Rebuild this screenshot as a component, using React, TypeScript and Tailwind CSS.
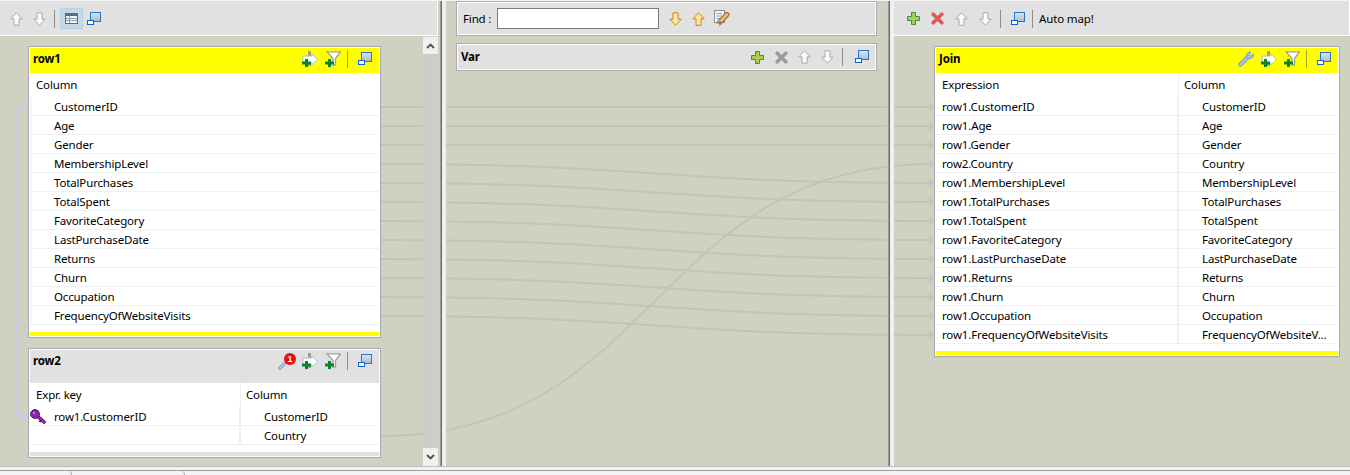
import React from 'react';

const leftCols = ['CustomerID', 'Age', 'Gender', 'MembershipLevel', 'TotalPurchases', 'TotalSpent', 'FavoriteCategory', 'LastPurchaseDate', 'Returns', 'Churn', 'Occupation', 'FrequencyOfWebsiteVisits'];

const joinRows: [string, string][] = [
  ['row1.CustomerID', 'CustomerID'],
  ['row1.Age', 'Age'],
  ['row1.Gender', 'Gender'],
  ['row2.Country', 'Country'],
  ['row1.MembershipLevel', 'MembershipLevel'],
  ['row1.TotalPurchases', 'TotalPurchases'],
  ['row1.TotalSpent', 'TotalSpent'],
  ['row1.FavoriteCategory', 'FavoriteCategory'],
  ['row1.LastPurchaseDate', 'LastPurchaseDate'],
  ['row1.Returns', 'Returns'],
  ['row1.Churn', 'Churn'],
  ['row1.Occupation', 'Occupation'],
  ['row1.FrequencyOfWebsiteVisits', 'FrequencyOfWebsiteV...'],
];

// from y on row1 -> to y on Join
const links: [number, number][] = [
  [107, 107], [126, 126], [145, 145], [164, 183], [183, 202], [202, 221],
  [221, 240], [240, 259], [259, 278], [278, 297], [297, 316], [316, 335],
];

const Links = () => (
  <svg className="absolute inset-0" width={1350} height={475} fill="none">
    {links.map(([a, b]) => (
      <g key={a}>
        <path d={`M381 ${a}C656 ${a} 656 ${b} 931 ${b}`} stroke="#c4c4b3" strokeWidth={2} />
        <polygon points={`929,${b - 5} 935,${b} 929,${b + 5}`} fill="#c6c6b5" />
      </g>
    ))}
    <path d="M381 436C656 436 656 164 931 164" stroke="#c4c4b3" strokeWidth={2} />
    <polygon points="929,159 935,164 929,169" fill="#c6c6b5" />
    <path d="M29 107H24Q16 107 16 115V409Q16 417 24 417H27" stroke="#d3c8ee" strokeWidth={2} />
    <polygon points="23,411 29,417 23,423" fill="#d3c8ee" />
  </svg>
);

const ArrowUp = ({ stroke = '#a9a9a9', fill = '#fbfbfb' }: { stroke?: string; fill?: string }) => (
  <svg width={13} height={14} viewBox="0 0 13 14" className="shrink-0">
    <polygon points="6.5,0.8 12.2,6.8 9,6.8 9,13.2 4,13.2 4,6.8 0.8,6.8" fill={fill} stroke={stroke} />
  </svg>
);

const ArrowDown = ({ stroke = '#a9a9a9', fill = '#fbfbfb' }: { stroke?: string; fill?: string }) => (
  <svg width={13} height={14} viewBox="0 0 13 14" className="shrink-0">
    <polygon points="6.5,13.2 12.2,7.2 9,7.2 9,0.8 4,0.8 4,7.2 0.8,7.2" fill={fill} stroke={stroke} />
  </svg>
);

const WindowIcon = () => (
  <svg width={14} height={14} viewBox="0 0 14 14" className="shrink-0">
    <defs>
      <linearGradient id="win" x1="0" y1="0" x2="0" y2="1">
        <stop offset="0" stopColor="#dbe4ee" />
        <stop offset="1" stopColor="#a9bccf" />
      </linearGradient>
    </defs>
    <rect x="3.5" y="0.5" width="10" height="9" fill="url(#win)" stroke="#2f73c9" />
    <rect x="0.5" y="8.5" width="6" height="4" fill="#ffffff" stroke="#0f62d0" />
  </svg>
);

const TableIcon = () => (
  <svg width={13} height={11} viewBox="0 0 13 11" className="shrink-0">
    <rect x="0.5" y="0.5" width="12" height="10" fill="#f4f6f8" stroke="#5d6b7d" />
    <rect x="1" y="1" width="11" height="2" fill="#5d6b7d" />
    <path d="M1 5.5H12M1 7.5H12M4.5 3V10" stroke="#8d9cb0" />
  </svg>
);

const GreenPlus = () => (
  <svg width={13} height={13} viewBox="0 0 13 13" className="shrink-0">
    <path d="M4.5 .5H8.5V4.5H12.5V8.5H8.5V12.5H4.5V8.5H.5V4.5H4.5Z" fill="#a9cb50" stroke="#3f8c58" />
  </svg>
);

const Cross = ({ fill }: { fill: string }) => (
  <svg width={13} height={13} viewBox="0 0 13 13" className="shrink-0">
    <path d="M2.2 2.2L10.8 10.8M10.8 2.2L2.2 10.8" stroke={fill} strokeWidth={3.6} strokeLinecap="round" />
  </svg>
);

const MapPlus = () => (
  <svg width={16} height={16} viewBox="0 0 16 16" className="shrink-0">
    <rect x="6" y="0" width="3" height="5" fill="#9c9c9c" />
    <polygon points="1,5 10,5 10,3 15.5,8.5 10,14 10,12 1,12" fill="#ffffff" stroke="#bdbdbd" />
    <rect x="6" y="12" width="3" height="3" fill="#9c9c9c" />
    <path d="M0 10.5H9V13.5H0ZM3 8H6V16H3Z" fill="#07862b" />
  </svg>
);

const FilterPlus = () => (
  <svg width={16} height={16} viewBox="0 0 16 16" className="shrink-0">
    <polygon points="2,.8 15.5,.8 10.5,7.5 10.5,14 8,14 8,7.5" fill="#ffffff" stroke="#a0a0a0" strokeWidth={1.3} />
    <path d="M0 10.5H9V13.5H0ZM3 8H6V16H3Z" fill="#07862b" />
  </svg>
);

const Wrench = () => (
  <svg width={16} height={16} viewBox="0 0 16 16" className="shrink-0">
    <path d="M2.5 13.5L9.5 6.5" stroke="#7d9cc8" strokeWidth={4.4} strokeLinecap="round" />
    <path d="M2.5 13.5L9.5 6.5" stroke="#b4cbe8" strokeWidth={2} strokeLinecap="round" />
    <path d="M9 7A4 4 0 0 1 13 1L10.8 3.6 12.6 5.4 15.4 3.2A4 4 0 0 1 9 7Z" fill="#a8c0e0" stroke="#7d9cc8" />
  </svg>
);

const KeySearch = () => (
  <svg width={18} height={17} viewBox="0 0 18 17" className="shrink-0">
    <path d="M2 15L7 10" stroke="#7fa4d6" strokeWidth={3.6} strokeLinecap="round" />
    <path d="M2 15L7 10" stroke="#bcd2ee" strokeWidth={1.4} strokeLinecap="round" />
    <circle cx="12" cy="6" r="6" fill="#ea0f0f" />
    <text x="12" y="9" textAnchor="middle" fontSize="9" fontWeight="700" fill="#ffffff" fontFamily="Liberation Sans, sans-serif">1</text>
  </svg>
);

const KeyIcon = () => (
  <svg width={16} height={15} viewBox="0 0 16 15" className="shrink-0">
    <path d="M5 5L14 13" stroke="#4d1160" strokeWidth={3.6} strokeLinecap="round" />
    <path d="M5 5L14 13" stroke="#a12fc0" strokeWidth={1.8} strokeLinecap="round" />
    <path d="M11 11L9.5 13.2" stroke="#4d1160" strokeWidth={1.6} />
    <circle cx="5" cy="5" r="4.4" fill="#8f24ad" stroke="#4d1160" />
    <circle cx="4" cy="4" r="1" fill="#d68ae6" />
  </svg>
);

const EditDoc = () => (
  <svg width={17} height={17} viewBox="0 0 17 17" className="shrink-0">
    <rect x="0.5" y="0.5" width="10" height="12" fill="#f1f4fa" stroke="#8c8f96" />
    <path d="M2.5 3.5H8M2.5 6H8M2.5 8.5H6" stroke="#7f9fd0" />
    <path d="M5 13L13 4.5" stroke="#8a6a33" strokeWidth={5} strokeLinecap="round" />
    <path d="M5 13L13 4.5" stroke="#f2bb6b" strokeWidth={3} strokeLinecap="round" />
    <path d="M1 16.5L5.5 11 8 13.5 3 16.5Z" fill="#fdf2c0" />
    <circle cx="6" cy="13" r="1.8" fill="#77736d" />
  </svg>
);

const Sep = ({ className }: { className: string }) => <div className={`w-px shrink-0 ${className}`} />;

const Toolbar = ({ children }: { children: React.ReactNode }) => (
  <div className="flex h-[35px] items-center border-r border-b border-white bg-[#e1e1e1] pt-px">{children}</div>
);

const Box = ({ className, children }: { className: string; children: React.ReactNode }) => (
  <div className={`border border-[#a6a9b2] bg-white p-px ${className}`}>{children}</div>
);

const HeadIcons = ({ sepColor, lead }: { sepColor: string; lead?: React.ReactNode }) => (
  <div className="ml-auto flex pr-[7px]">
    {lead}
    <MapPlus />
    <div className="ml-[7px]"><FilterPlus /></div>
    <Sep className={`ml-[6px] -mt-px h-[18px] ${sepColor}`} />
    <div className="ml-[10px] mt-px"><WindowIcon /></div>
  </div>
);

const Row1Table = () => (
  <Box className="w-[353px]">
    <div className="flex h-[25px] bg-[#ffff00] pl-[3px] pt-[3px]">
      <span className="font-bold leading-4">row1</span>
      <HeadIcons sepColor="bg-[#a8a820]" />
    </div>
    <div className="flex h-6 items-center pl-[6px]">Column</div>
    {leftCols.map((c) => (
      <div key={c} className="ml-px flex h-[19px] items-center border-b border-l border-[#edf0f4] pl-[22px] pt-[2px]">{c}</div>
    ))}
    <div className="mt-[7px] h-1 bg-[#ffff00]" />
  </Box>
);

const Row2Table = () => (
  <Box className="mt-[10px] w-[353px]">
    <div className="flex h-[33px] bg-[#e1e1e1] pl-[3px] pt-[3px]">
      <span className="font-bold leading-4">row2</span>
      <HeadIcons
        sepColor="bg-[#8d8d8d]"
        lead={<div className="mr-[6px]"><KeySearch /></div>}
      />
    </div>
    <div className="flex h-6 items-center">
      <div className="flex h-full w-[211px] items-center border-r border-[#edf0f4] pl-[6px]">Expr. key</div>
      <div className="pl-[5px]">Column</div>
    </div>
    <div className="flex h-[19px] items-center border-b border-[#edf0f4]">
      <div className="flex h-full w-[211px] items-center border-r-2 border-[#edf0f4]">
        <KeyIcon />
        <span className="ml-2 pt-[2px]">row1.CustomerID</span>
      </div>
      <div className="pl-[23px] pt-[2px]">CustomerID</div>
    </div>
    <div className="flex h-[19px] items-center border-b border-[#edf0f4]">
      <div className="h-full w-[211px] border-r-2 border-[#edf0f4]" />
      <div className="pl-[23px] pt-[2px]">Country</div>
    </div>
    <div className="mt-[7px] h-1 bg-[#e1e1e1]" />
  </Box>
);

const JoinTable = () => (
  <Box className="w-[406px]">
    <div className="flex h-[25px] bg-[#ffff00] pl-[3px] pt-[3px]">
      <span className="font-bold leading-4">Join</span>
      <HeadIcons sepColor="bg-[#a8a820]" lead={<div className="mr-[7px]"><Wrench /></div>} />
    </div>
    <div className="flex h-6 items-center">
      <div className="flex h-full w-[243px] items-center border-r border-[#edf0f4] pl-[6px]">Expression</div>
      <div className="pl-[5px]">Column</div>
    </div>
    {joinRows.map(([expr, col]) => (
      <div key={col} className="flex h-[19px] items-center border-b border-[#edf0f4]">
        <div className="flex h-full w-[243px] items-center border-r-2 border-[#edf0f4] pl-[6px] pt-[2px]">{expr}</div>
        <div className="pl-[23px] pt-[2px]">{col}</div>
      </div>
    ))}
    <div className="mt-[7px] h-1 bg-[#ffff00]" />
  </Box>
);

const ScrollBar = () => (
  <div className="mt-px flex w-[15px] flex-col bg-[#f0f0f0]">
    <div className="flex h-[17px] items-center justify-center">
      <svg width={9} height={6} viewBox="0 0 9 6" fill="none"><path d="M1 5L4.5 1.5 8 5" stroke="#505050" strokeWidth={1.8} /></svg>
    </div>
    <div className="flex-1 bg-[#cdcdcd]" />
    <div className="flex h-[18px] items-center justify-center">
      <svg width={9} height={6} viewBox="0 0 9 6" fill="none"><path d="M1 1L4.5 4.5 8 1" stroke="#505050" strokeWidth={1.8} /></svg>
    </div>
  </div>
);

const Sash = ({ className }: { className: string }) => (
  <div className={`flex shrink-0 bg-[#f0f0f0] ${className}`}>
    <div className="w-px bg-[#d1d1c2]" />
    <div className="w-px bg-[#9a9a9a]" />
    <div className="w-px bg-[#6d6d6d]" />
  </div>
);

export default function App() {
  return (
    <div className="relative h-[475px] w-[1350px] overflow-hidden bg-[#d1d1c2] font-['Noto_Sans',sans-serif] text-[11.5px] leading-4 tracking-[-0.15px] text-black">
      <Links />
      <div className="relative flex h-[466px] border-t border-[#f4f4f4]">
        {/* Left: inputs */}
        <section className="flex w-[439px] shrink-0 flex-col pr-px">
          <Toolbar>
            <div className="ml-[10px]"><ArrowUp /></div>
            <div className="ml-[10px]"><ArrowDown /></div>
            <Sep className="ml-2 h-[18px] bg-[#8d8d8d]" />
            <div className="ml-[5px] flex h-[21px] w-[23px] items-center justify-center border border-[#b9d1e2] bg-[#c6d9e6]">
              <TableIcon />
            </div>
            <div className="ml-1"><WindowIcon /></div>
          </Toolbar>
          <div className="flex min-h-0 flex-1">
            <div className="min-w-0 flex-1 pl-7 pt-[10px]">
              <Row1Table />
              <Row2Table />
            </div>
            <ScrollBar />
          </div>
        </section>

        <Sash className="w-[7px]" />

        {/* Middle: vars */}
        <section className="w-[441px] shrink-0 pl-[10px] pr-[10px]">
          <div className="flex h-[35px] items-center border border-[#ababab] bg-[#e1e1e1] pl-[6px] outline outline-1 -outline-offset-2 outline-white">
            <span className="w-[34px]">Find :</span>
            <div className="h-[21px] w-[162px] border border-[#7a7a7a] bg-white" />
            <div className="ml-[10px]"><ArrowDown stroke="#c8860f" fill="#ffe8a6" /></div>
            <div className="ml-[10px]"><ArrowUp stroke="#c8860f" fill="#ffe8a6" /></div>
            <div className="ml-[9px]"><EditDoc /></div>
          </div>
          <div className="mt-[7px] flex h-[28px] items-center border border-[#ababab] bg-[#e1e1e1] pl-[4px] pr-[7px] outline outline-1 -outline-offset-2 outline-white">
            <span className="font-bold">Var</span>
            <div className="ml-auto flex items-center">
              <GreenPlus />
              <div className="ml-[11px]"><Cross fill="#9a9a9a" /></div>
              <div className="ml-[10px]"><ArrowUp /></div>
              <div className="ml-[10px]"><ArrowDown /></div>
              <Sep className="ml-2 h-[18px] bg-[#8d8d8d]" />
              <div className="ml-3"><WindowIcon /></div>
            </div>
          </div>
        </section>

        <Sash className="w-[7px]" />

        {/* Right: outputs */}
        <section className="min-w-0 flex-1">
          <Toolbar>
            <div className="ml-[13px]"><GreenPlus /></div>
            <div className="ml-[11px]"><Cross fill="#e2535b" /></div>
            <div className="ml-[11px]"><ArrowUp /></div>
            <div className="ml-[11px]"><ArrowDown /></div>
            <Sep className="ml-[8px] h-[18px] bg-[#8d8d8d]" />
            <div className="ml-[10px]"><WindowIcon /></div>
            <Sep className="ml-[7px] h-[18px] bg-[#8d8d8d]" />
            <span className="ml-[6px]">Auto map!</span>
          </Toolbar>
          <div className="pl-[40px] pt-[10px]">
            <JoinTable />
          </div>
        </section>
      </div>

      {/* Tab strip */}
      <div className="relative h-[9px] border-t border-[#bdbdbd] bg-[#f3f3f3] pt-[3px]">
        <div className="flex h-full border-t border-[#a0a0a0]">
          <div className="h-full w-[72px] rounded-tr-md border-r border-[#a0a0a0]" />
          <div className="h-full w-[113px] rounded-tr-md border-r border-[#a0a0a0]" />
        </div>
      </div>
    </div>
  );
}
